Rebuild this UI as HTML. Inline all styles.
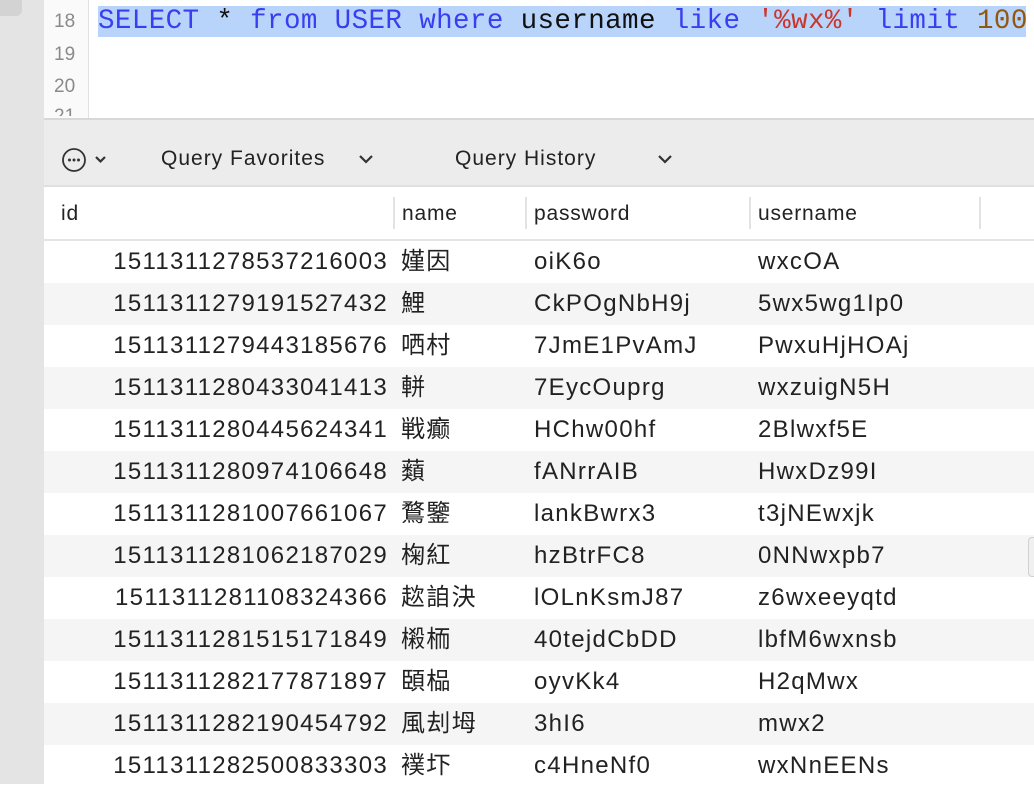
<!DOCTYPE html>
<html><head><meta charset="utf-8"><style>
body{margin:0;width:1034px;height:784px;overflow:hidden;background:#fff;font-family:"Liberation Sans","Noto Sans CJK SC",sans-serif;position:relative}
.side{position:absolute;left:0;top:0;width:44px;height:784px;background:#e3e4e3}
.side .knob{position:absolute;left:0;top:0;width:22px;height:16px;background:#d2d3d2;border-radius:0 0 6px 0}
.gut{position:absolute;left:44px;top:0;width:44px;height:118px;background:#fafafa;border-right:1px solid #e2e2e2}
.ln{position:absolute;left:54px;font-size:19px;color:#8a8a8a}
.code{position:absolute;left:98px;top:6px;height:31px;background:#b9d4fb;width:928px;font-family:"Liberation Mono",monospace;font-size:27.5px;letter-spacing:0.4px;line-height:31px;white-space:pre;color:#111}
.k{color:#3a3ef0}.s{color:#c8372c}.n{color:#92580f}
.tb{position:absolute;left:44px;top:118px;width:990px;height:65px;background:#ececec;border-top:2px solid #d8d8d8;border-bottom:2px solid #e0e0e0;font-size:21px;letter-spacing:1px;color:#222}
.tb span{position:absolute;top:27px}
.hdr{position:absolute;left:44px;top:185px;width:990px;height:54px;border-bottom:2px solid #e4e4e4;font-size:21px;letter-spacing:0.8px;color:#222}
.hdr span{position:absolute;top:17px}
.sep{position:absolute;top:12px;width:2px;height:32px;background:#e2e2e2}
.row{position:absolute;left:44px;width:990px;height:42px;font-size:24px;letter-spacing:1.3px;color:#222;line-height:42px}
.row span{position:absolute;top:0}
.id{right:646px;text-align:right}
</style></head><body>
<div class="side"><div class="knob"></div></div>
<div class="gut"></div>
<div class="ln" style="top:11px">18</div>
<div class="ln" style="top:44px">19</div>
<div class="ln" style="top:76px">20</div>
<div class="ln" style="top:106px;height:10px;overflow:hidden">21</div>
<div class="code"><span class="k">SELECT</span> * <span class="k">from</span> <span class="k">USER</span> <span class="k">where</span> username <span class="k">like</span> <span class="s">'%wx%'</span> <span class="k">limit</span> <span class="n">100</span></div>
<div class="tb">
<svg style="position:absolute;left:18px;top:27px" width="46" height="26" viewBox="0 0 46 26"><circle cx="12" cy="13" r="11" fill="none" stroke="#333" stroke-width="1.8"/><circle cx="7.5" cy="13" r="1.5" fill="#333"/><circle cx="12" cy="13" r="1.5" fill="#333"/><circle cx="16.5" cy="13" r="1.5" fill="#333"/><path d="M34 10l4.5 4.5L43 10" fill="none" stroke="#333" stroke-width="2.2"/></svg>
<span style="left:117px">Query Favorites</span>
<svg style="position:absolute;left:315px;top:34px" width="14" height="10"><path d="M1 2l6 6 6-6" fill="none" stroke="#333" stroke-width="2.2"/></svg>
<span style="left:411px">Query History</span>
<svg style="position:absolute;left:614px;top:34px" width="14" height="10"><path d="M1 2l6 6 6-6" fill="none" stroke="#333" stroke-width="2.2"/></svg>
</div>
<div class="hdr">
<span style="left:17px">id</span>
<div class="sep" style="left:349px"></div><span style="left:358px">name</span>
<div class="sep" style="left:481px"></div><span style="left:490px">password</span>
<div class="sep" style="left:705px"></div><span style="left:714px">username</span>
<div class="sep" style="left:935px"></div>
</div>
<div style="position:absolute;left:0;top:241px;width:1034px;height:543px;background:#fff">
<div class="row" style="top:0px;background:#fff"><span class="id">1511311278537216003</span><span style="left:357px">嫤因</span><span style="left:490px">oiK6o</span><span style="left:714px">wxcOA</span></div>
<div class="row" style="top:42px;background:#f4f5f4"><span class="id">1511311279191527432</span><span style="left:357px">鯉</span><span style="left:490px">CkPOgNbH9j</span><span style="left:714px">5wx5wg1Ip0</span></div>
<div class="row" style="top:84px;background:#fff"><span class="id">1511311279443185676</span><span style="left:357px">哂村</span><span style="left:490px">7JmE1PvAmJ</span><span style="left:714px">PwxuHjHOAj</span></div>
<div class="row" style="top:126px;background:#f4f5f4"><span class="id">1511311280433041413</span><span style="left:357px">軿</span><span style="left:490px">7EycOuprg</span><span style="left:714px">wxzuigN5H</span></div>
<div class="row" style="top:168px;background:#fff"><span class="id">1511311280445624341</span><span style="left:357px">戦癫</span><span style="left:490px">HChw00hf</span><span style="left:714px">2Blwxf5E</span></div>
<div class="row" style="top:210px;background:#f4f5f4"><span class="id">1511311280974106648</span><span style="left:357px">蘱</span><span style="left:490px">fANrrAIB</span><span style="left:714px">HwxDz99I</span></div>
<div class="row" style="top:252px;background:#fff"><span class="id">1511311281007661067</span><span style="left:357px">鶩鑒</span><span style="left:490px">lankBwrx3</span><span style="left:714px">t3jNEwxjk</span></div>
<div class="row" style="top:294px;background:#f4f5f4"><span class="id">1511311281062187029</span><span style="left:357px">椈紅</span><span style="left:490px">hzBtrFC8</span><span style="left:714px">0NNwxpb7</span></div>
<div class="row" style="top:336px;background:#fff"><span class="id">1511311281108324366</span><span style="left:357px">趑詯決</span><span style="left:490px">lOLnKsmJ87</span><span style="left:714px">z6wxeeyqtd</span></div>
<div class="row" style="top:378px;background:#f4f5f4"><span class="id">1511311281515171849</span><span style="left:357px">樧栭</span><span style="left:490px">40tejdCbDD</span><span style="left:714px">lbfM6wxnsb</span></div>
<div class="row" style="top:420px;background:#fff"><span class="id">1511311282177871897</span><span style="left:357px">頣榀</span><span style="left:490px">oyvKk4</span><span style="left:714px">H2qMwx</span></div>
<div class="row" style="top:462px;background:#f4f5f4"><span class="id">1511311282190454792</span><span style="left:357px">風刦坶</span><span style="left:490px">3hI6</span><span style="left:714px">mwx2</span></div>
<div class="row" style="top:504px;background:#fff"><span class="id">1511311282500833303</span><span style="left:357px">襆圷</span><span style="left:490px">c4HneNf0</span><span style="left:714px">wxNnEENs</span></div>
</div>
<div style="position:absolute;left:0;top:241px;width:44px;height:543px;background:#e3e4e3"></div>
<div style="position:absolute;left:1028px;top:537px;width:8px;height:38px;background:#f0f0f0;border:1px solid #d0d0d0;border-radius:4px"></div>
</body></html>
